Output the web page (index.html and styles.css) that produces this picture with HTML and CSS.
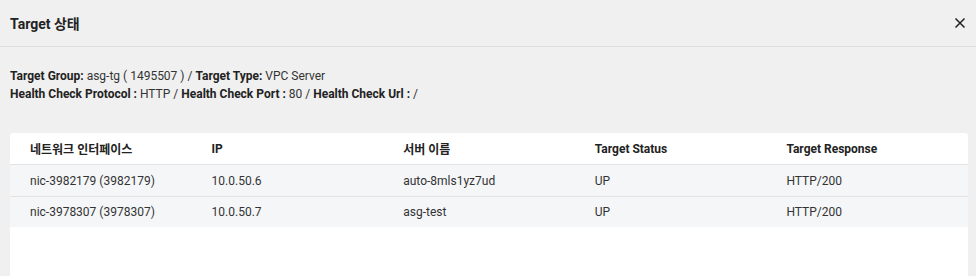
FILE: index.html
```html
<!DOCTYPE html>
<html lang="ko">
<head>
<meta charset="utf-8">
<title>Target 상태</title>
<link rel="stylesheet" href="styles.css">
</head>
<body>
<div class="modal">
  <div class="modal-header">
    <h2 class="modal-title">Target 상태</h2>
    <button class="close-btn" aria-label="close">
      <svg width="12" height="12" viewBox="0 0 12 12"><path d="M1.5 1.5 L10.5 10.5 M10.5 1.5 L1.5 10.5" stroke="#222" stroke-width="1.5" fill="none"/></svg>
    </button>
  </div>
  <div class="modal-body">
    <div class="info">
      <div><b>Target Group:</b> asg-tg ( 1495507 ) / <b>Target Type:</b> VPC Server</div>
      <div><b>Health Check Protocol :</b> HTTP / <b>Health Check Port :</b> 80 / <b>Health Check Url :</b> /</div>
    </div>
    <div class="card">
      <table class="tbl">
        <thead>
          <tr><th>네트워크 인터페이스</th><th>IP</th><th>서버 이름</th><th>Target Status</th><th>Target Response</th></tr>
        </thead>
        <tbody>
          <tr><td>nic-3982179 (3982179)</td><td>10.0.50.6</td><td>auto-8mls1yz7ud</td><td>UP</td><td>HTTP/200</td></tr>
          <tr><td>nic-3978307 (3978307)</td><td>10.0.50.7</td><td>asg-test</td><td>UP</td><td>HTTP/200</td></tr>
        </tbody>
      </table>
    </div>
  </div>
</div>
</body>
</html>
```
FILE: styles.css
```css
html, body {
  margin: 0;
  padding: 0;
  background: #f0f0f0;
  font-family: Roboto, "Noto Sans CJK KR", sans-serif;
  color: #333;
}
.modal {
  width: 976px;
  height: 276px;
  overflow: hidden;
}
.modal-header {
  height: 46px;
  border-bottom: 1px solid #dedede;
  display: flex;
  align-items: center;
  justify-content: space-between;
  padding: 0 8px 0 10px;
}
.modal-title {
  margin: 0;
  font-size: 14px;
  font-weight: 700;
  color: #222;
}
.close-btn {
  border: 0;
  background: transparent;
  padding: 0;
  width: 16px;
  height: 16px;
  display: flex;
  align-items: center;
  justify-content: center;
  cursor: pointer;
}
.modal-body {
  padding: 20px 8px 0 10px;
}
.info {
  font-size: 12px;
  line-height: 18px;
  color: #333;
}
.info b {
  font-weight: 700;
  color: #222;
}
.card {
  margin-top: 30px;
  background: #fff;
  border-radius: 3px 3px 0 0;
  height: 160px;
}
.tbl {
  width: 100%;
  border-collapse: collapse;
  table-layout: fixed;
  font-size: 12px;
}
.tbl th, .tbl td {
  text-align: left;
  padding: 0 10px;
  height: 31px;
  border-bottom: 1px solid #e3e3e3;
}
.tbl th:first-child, .tbl td:first-child {
  padding-left: 20px;
}
.tbl th {
  font-weight: 700;
  color: #222;
}
.tbl tbody tr {
  background: #f5f6f8;
}
.tbl tbody tr:last-child td {
  border-bottom: 0;
  height: 30px;
}
```
